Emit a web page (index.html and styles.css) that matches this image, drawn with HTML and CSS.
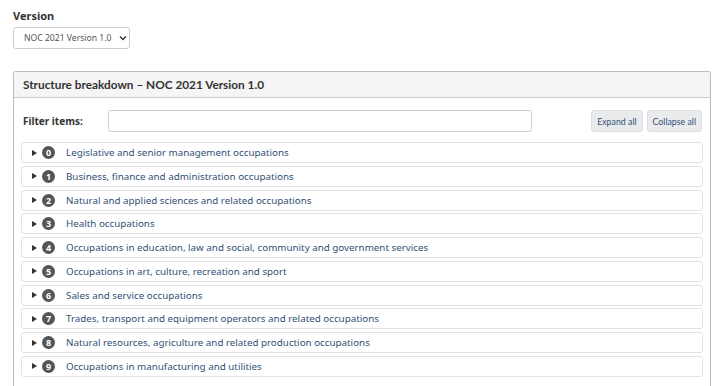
FILE: index.html
```html
<!DOCTYPE html>
<html lang="en">
<head>
    <meta charset="UTF-8">
    <meta name="viewport" content="width=device-width, initial-scale=1.0">
    <title>NOC Structure</title>
    <link rel="stylesheet" href="styles.css">
</head>
<body>
    <div class="version">
        <label for="version">Version</label>
        <div class="select-wrap">
            <select id="version">
                <option>NOC 2021 Version 1.0</option>
            </select>
            <svg class="chev" width="8" height="6" viewBox="0 0 8 6"><path d="M1 1.5 L4 4.5 L7 1.5" fill="none" stroke="#333" stroke-width="1.4"/></svg>
        </div>
    </div>

    <div class="panel">
        <div class="panel-heading">Structure breakdown – NOC 2021 Version 1.0</div>
        <div class="panel-body">
            <div class="filter-row">
                <label for="filter">Filter items:</label>
                <input type="text" id="filter">
                <div class="buttons">
                    <button>Expand all</button>
                    <button>Collapse all</button>
                </div>
            </div>

            <ul class="tree">
                <li><span class="arrow"></span><span class="badge">0</span><a href="#">Legislative and senior management occupations</a></li>
                <li><span class="arrow"></span><span class="badge">1</span><a href="#">Business, finance and administration occupations</a></li>
                <li><span class="arrow"></span><span class="badge">2</span><a href="#">Natural and applied sciences and related occupations</a></li>
                <li><span class="arrow"></span><span class="badge">3</span><a href="#">Health occupations</a></li>
                <li><span class="arrow"></span><span class="badge">4</span><a href="#">Occupations in education, law and social, community and government services</a></li>
                <li><span class="arrow"></span><span class="badge">5</span><a href="#">Occupations in art, culture, recreation and sport</a></li>
                <li><span class="arrow"></span><span class="badge">6</span><a href="#">Sales and service occupations</a></li>
                <li><span class="arrow"></span><span class="badge">7</span><a href="#">Trades, transport and equipment operators and related occupations</a></li>
                <li><span class="arrow"></span><span class="badge">8</span><a href="#">Natural resources, agriculture and related production occupations</a></li>
                <li><span class="arrow"></span><span class="badge">9</span><a href="#">Occupations in manufacturing and utilities</a></li>
            </ul>
        </div>
    </div>
</body>
</html>
```

FILE: styles.css
```css
body {
    margin: 0;
    padding: 8px 6px 0 13px;
    font-family: "Noto Sans", sans-serif;
    color: #333;
    background: #fff;
    overflow: hidden;
}
.version label {
    display: block;
    font-weight: bold;
    font-size: 11px;
    line-height: 15px;
    margin-bottom: 4px;
}
.select-wrap {
    position: relative;
    width: 117px;
}
.version select {
    display: block;
    width: 117px;
    height: 22px;
    padding: 0 0 0 10px;
    border: 1px solid #ccc;
    border-radius: 3px;
    background: #fff;
    font-family: "Noto Sans", sans-serif;
    font-size: 8.6px;
    color: #555;
    appearance: none;
}
.chev {
    position: absolute;
    right: 3px;
    top: 8px;
}
.panel {
    margin-top: 22px;
    border: 1px solid #bbb;
    border-bottom: none;
    border-radius: 3px 3px 0 0;
    height: 330px;
}
.panel-heading {
    font-family: Lato, sans-serif;
    font-weight: bold;
    font-size: 11.8px;
    height: 25px;
    line-height: 25px;
    padding-left: 9px;
    background: #f5f5f5;
    border-bottom: 1px solid #ccc;
    color: #333;
}
.panel-body {
    padding: 12px 7px 0 7px;
}
.filter-row {
    display: flex;
    align-items: center;
    height: 22px;
    margin-bottom: 10px;
}
.filter-row label {
    font-weight: bold;
    font-size: 10px;
    width: 85px;
    padding-left: 2px;
}
.filter-row input {
    width: 424px;
    height: 22px;
    box-sizing: border-box;
    border: 1px solid #ccc;
    border-radius: 3px;
}
.buttons {
    margin-left: auto;
    display: flex;
    gap: 4px;
    padding-right: 1px;
}
.buttons button {
    font-family: Lato, sans-serif;
    font-size: 8.8px;
    color: #335075;
    background: #eaebed;
    border: 1px solid #dcdee1;
    border-radius: 3px;
    height: 22px;
    padding: 0 5px;
}
.tree {
    list-style: none;
    margin: 0;
    padding: 0;
}
.tree li {
    display: flex;
    align-items: center;
    height: 21px;
    box-sizing: border-box;
    margin-bottom: 2.75px;
    border: 1px solid #e3e3e3;
    border-radius: 3px;
    padding-left: 10px;
    font-size: 9.8px;
}
.arrow {
    width: 0;
    height: 0;
    border-top: 3.5px solid transparent;
    border-bottom: 3.5px solid transparent;
    border-left: 5px solid #333;
    margin-right: 5px;
}
.badge {
    width: 13px;
    height: 13px;
    border-radius: 50%;
    background: #555;
    color: #fff;
    font-weight: bold;
    font-size: 9px;
    line-height: 13px;
    text-align: center;
    margin-right: 11px;
}
.tree a {
    color: #335075;
    text-decoration: none;
}
```
